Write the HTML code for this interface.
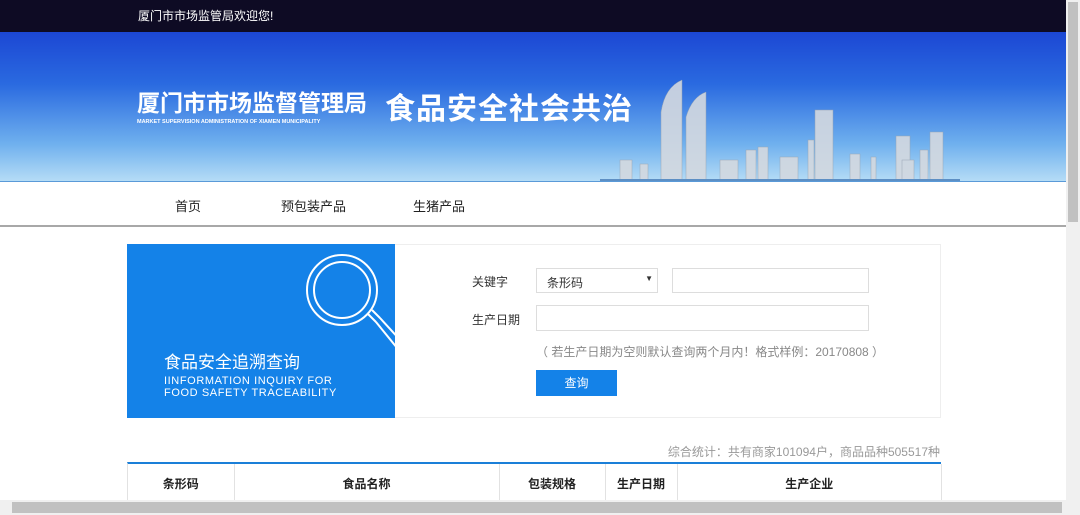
<!DOCTYPE html>
<html><head><meta charset="utf-8"><style>
*{margin:0;padding:0;box-sizing:border-box}
body{width:1080px;height:515px;overflow:hidden;position:relative;background:#fff;font-family:"Liberation Sans","Noto Sans CJK SC",sans-serif;font-size:12px;color:#333}
.abs{position:absolute}
#top{left:0;top:0;width:1066px;height:32px;background:#0e0b24;color:#fff;font-size:12px;line-height:32px;padding-left:138px}
#ban{left:0;top:32px;width:1066px;height:149px;background:linear-gradient(#1c47d4 0%,#2a6ae0 35%,#6fb0ee 75%,#b5dcf6 100%)}
#ban .t1{left:137px;top:52px;color:#fff;font-size:23px;font-weight:bold;letter-spacing:0px;white-space:nowrap}
#ban .t2{left:385px;top:52px;color:#fff;font-size:30px;font-weight:bold;letter-spacing:1px;white-space:nowrap}
#ban .en{left:137px;top:87px;color:#fff;font-size:5.5px;font-weight:bold;white-space:nowrap}
#nav{left:0;top:181px;width:1066px;height:46px;border-top:1px solid #5a9ad8;border-bottom:2px solid #a8a8a8;font-size:13px;color:#222}
#nav span{position:absolute;top:14px}
#vs{left:1066px;top:0;width:14px;height:500px;background:#f0f0f0}
#hs{left:0;top:500px;width:1080px;height:15px;background:#f0f0f0}
.in{border:1px solid #ddd;background:#fff}
td{border-right:1px solid #e2e2e2}
</style></head><body>
<div class="abs" id="top">厦门市市场监管局欢迎您!</div>
<div class="abs" id="ban">
<div class="abs t1">厦门市市场监督管理局</div>
<div class="abs en">MARKET SUPERVISION ADMINISTRATION OF XIAMEN MUNICIPALITY</div>
<div class="abs t2">食品安全社会共治</div>
<svg class="abs" style="left:600px;top:0" width="400" height="149">
<g fill="#d4d9e0" stroke="#9aa4b0" stroke-width="0.5" opacity="0.9">
<path d="M61 149 L61 80 Q65 55 82 48 L82 149Z"/><path d="M86 149 L86 85 Q92 65 106 60 L106 149Z"/>
<rect x="146" y="118" width="10" height="31"/><rect x="158" y="115" width="10" height="34"/>
<rect x="180" y="125" width="18" height="24"/><rect x="208" y="108" width="6" height="41"/>
<rect x="215" y="78" width="18" height="71"/><rect x="250" y="122" width="10" height="27"/>
<rect x="271" y="125" width="5" height="24"/><rect x="296" y="104" width="14" height="45"/>
<rect x="302" y="128" width="12" height="21"/><rect x="320" y="118" width="8" height="31"/>
<rect x="330" y="100" width="13" height="49"/><rect x="20" y="128" width="12" height="21"/>
<rect x="40" y="132" width="8" height="17"/><rect x="120" y="128" width="18" height="21"/>
</g><rect x="0" y="147" width="360" height="2" fill="#5d8fc4"/></svg>
</div>
<div class="abs" id="nav"><span style="left:175px">首页</span><span style="left:281px">预包装产品</span><span style="left:413px">生猪产品</span></div>
<div class="abs" style="left:127px;top:244px;width:814px;height:174px;border:1px solid #eee"></div>
<div class="abs" style="left:127px;top:244px;width:268px;height:174px;background:#1482e8;overflow:hidden">
<svg class="abs" style="left:175px;top:10px" width="100" height="110"><g fill="none" stroke="#fff" stroke-width="2"><circle cx="40" cy="36" r="35"/><circle cx="40" cy="36" r="28"/><path d="M66 60 L74 68 M70 56 L78 64 M74 68 L100 100 M78 64 L100 88"/></g></svg>
<div class="abs" style="left:37px;top:104px;color:#fff;font-size:17px">食品安全追溯查询</div>
<div class="abs" style="left:37px;top:131px;color:#fff;font-size:11px;line-height:12px;letter-spacing:0.6px">IINFORMATION INQUIRY FOR<br>FOOD SAFETY TRACEABILITY</div>
</div>
<div class="abs" style="left:472px;top:273px">关键字</div>
<div class="abs in" style="left:536px;top:268px;width:122px;height:25px;padding:5px 10px">条形码<span style="position:absolute;right:4px;top:5px;font-size:8px">▼</span></div>
<div class="abs in" style="left:672px;top:268px;width:197px;height:25px"></div>
<div class="abs" style="left:472px;top:311px">生产日期</div>
<div class="abs in" style="left:536px;top:305px;width:333px;height:26px"></div>
<div class="abs" style="left:536px;top:343px;color:#888;white-space:nowrap">（ 若生产日期为空则默认查询两个月内！格式样例：20170808 ）</div>
<div class="abs" style="left:536px;top:370px;width:81px;height:26px;background:#1482e8;color:#fff;text-align:center;line-height:26px">查询</div>
<div class="abs" style="left:600px;top:443px;width:340px;text-align:right;color:#999">综合统计：共有商家101094户，商品品种505517种</div>
<div class="abs" style="left:127px;top:462px;width:814px;height:38px;border-top:2px solid #1a7fd8;border-left:1px solid #e2e2e2;font-weight:bold;font-size:12px;color:#222">
<table style="border-collapse:collapse;width:814px;height:38px;text-align:center"><tr>
<td style="width:106px">条形码</td><td style="width:265px">食品名称</td><td style="width:106px">包装规格</td><td style="width:72px">生产日期</td><td>生产企业</td></tr></table></div>
<div class="abs" id="vs"><div class="abs" style="left:2px;top:2px;width:10px;height:220px;background:#c1c1c1"></div></div>
<div class="abs" id="hs"><div class="abs" style="left:12px;top:2px;width:1050px;height:11px;background:#c1c1c1"></div></div>
</body></html>
